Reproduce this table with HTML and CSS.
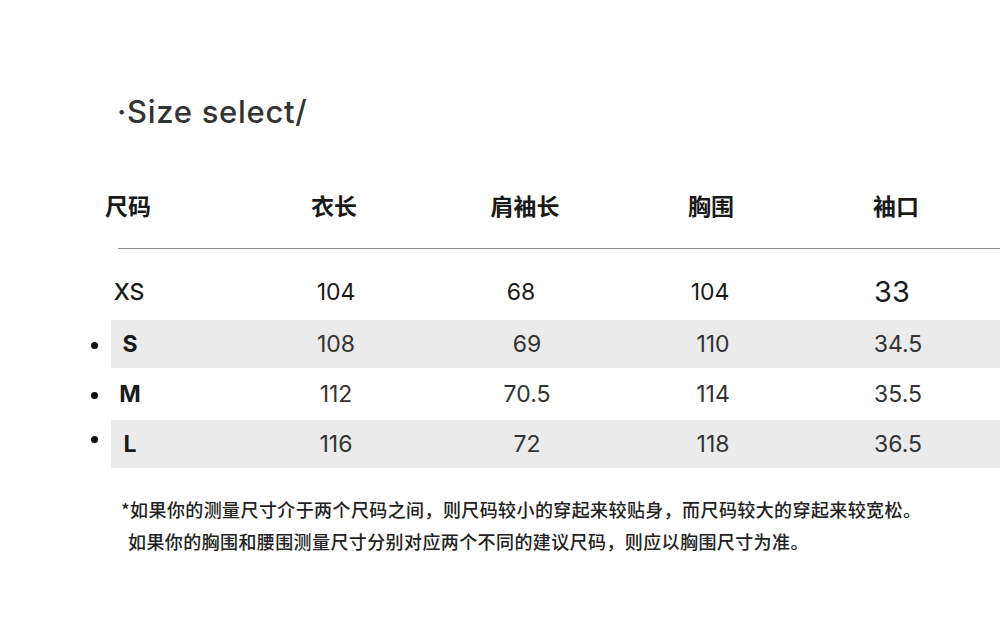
FILE: index.html
```html
<!DOCTYPE html>
<html lang="zh">
<head>
<meta charset="utf-8">
<link rel="stylesheet" href="styles.css">
</head>
<body>
<div class="page">
  <h1 class="title">·Size select/</h1>
  <div class="table">
    <div class="row head">
      <span class="mark"></span>
      <div class="cells">
        <div class="cell"><span>尺码</span></div>
        <div class="cell"><span>衣长</span></div>
        <div class="cell"><span>肩袖长</span></div>
        <div class="cell"><span>胸围</span></div>
        <div class="cell"><span>袖口</span></div>
      </div>
    </div>
    <div class="rule"></div>
    <div class="row xs">
      <span class="mark"></span>
      <div class="cells">
        <div class="cell size-xs"><span>XS</span></div>
        <div class="cell"><span>104</span></div>
        <div class="cell shift-l"><span>68</span></div>
        <div class="cell shift-s"><span>104</span></div>
        <div class="cell big shift-l"><span>33</span></div>
      </div>
    </div>
    <div class="row">
      <span class="mark dot"></span>
      <div class="cells band">
        <div class="cell size"><span>S</span></div>
        <div class="cell"><span>108</span></div>
        <div class="cell"><span>69</span></div>
        <div class="cell"><span>110</span></div>
        <div class="cell"><span>34.5</span></div>
      </div>
    </div>
    <div class="row tall">
      <span class="mark dot"></span>
      <div class="cells">
        <div class="cell size"><span>M</span></div>
        <div class="cell"><span>112</span></div>
        <div class="cell"><span>70.5</span></div>
        <div class="cell"><span>114</span></div>
        <div class="cell"><span>35.5</span></div>
      </div>
    </div>
    <div class="row">
      <span class="mark dot up"></span>
      <div class="cells band">
        <div class="cell size"><span>L</span></div>
        <div class="cell"><span>116</span></div>
        <div class="cell"><span>72</span></div>
        <div class="cell"><span>118</span></div>
        <div class="cell"><span>36.5</span></div>
      </div>
    </div>
  </div>
  <div class="note">
    <p>*如果你的测量尺寸介于两个尺码之间，则尺码较小的穿起来较贴身，而尺码较大的穿起来较宽松。</p>
    <p class="indent">如果你的胸围和腰围测量尺寸分别对应两个不同的建议尺码，则应以胸围尺寸为准。</p>
  </div>
</div>
</body>
</html>
```

FILE: styles.css
```css
* { box-sizing: border-box; }
html, body {
  margin: 0;
  padding: 0;
  background: #ffffff;
}
body {
  font-family: Inter, "Noto Sans CJK SC", sans-serif;
  color: #333333;
}
.page {
  width: 1000px;
  height: 625px;
  overflow: hidden;
}
.title {
  margin: 92px 0 0 117px;
  font-size: 31px;
  line-height: 40px;
  font-weight: 500;
  color: #333333;
  letter-spacing: 0.7px;
}
.table {
  margin-top: 53px;
  margin-left: 90px;
}
.row {
  display: flex;
  height: 48px;
  align-items: stretch;
}
.row.head {
  height: 40px;
}
.row.xs {
  margin-top: 19px;
  margin-bottom: 4px;
}
.row.tall {
  height: 52px;
}
.mark {
  width: 21px;
  flex: none;
  display: flex;
  align-items: center;
}
.mark.dot::before {
  content: "";
  width: 7px;
  height: 7px;
  border-radius: 50%;
  background: #111111;
  margin-left: 1px;
  margin-top: 2px;
}
.mark.dot.up::before {
  margin-top: -9px;
}
.cells {
  flex: 1;
  display: grid;
  grid-template-columns: 206px 191px 186px 185px 1fr;
  padding-left: 19px;
  align-items: center;
}
.band {
  background: #ebebeb;
}
.cell {
  width: 0;
  display: flex;
  justify-content: center;
  white-space: nowrap;
  font-size: 23px;
  line-height: 30px;
  color: #333333;
}
.head .cell {
  font-family: "Noto Sans CJK SC", sans-serif;
  font-weight: 700;
  color: #1a1a1a;
  margin-left: -2px;
}
.xs .cell {
  color: #1a1a1a;
}
.cell.size {
  font-weight: 700;
  color: #1a1a1a;
}
.cell.size-xs {
  margin-left: -1px;
  font-weight: 500;
}
.cell.big {
  font-size: 29px;
}
.cell.shift-l {
  margin-left: -6px;
}
.cell.shift-s {
  margin-left: -3px;
}
.rule {
  height: 1px;
  background: #8c8c8c;
  margin: 23px 0 0 28px;
}
.note {
  margin: 25px 0 0 121px;
  font-family: "Noto Sans CJK SC", sans-serif;
  font-size: 18px;
  line-height: 32px;
  font-weight: 500;
  color: #222222;
  letter-spacing: 0.4px;
}
.note p {
  margin: 0;
  white-space: nowrap;
}
.note .indent {
  padding-left: 7px;
}
```
